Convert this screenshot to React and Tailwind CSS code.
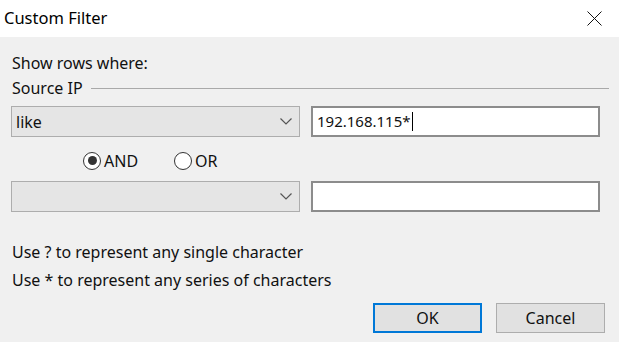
import { useState } from 'react'

const font = { fontFamily: '"Noto Sans", "Open Sans", sans-serif' }

function Chevron() {
  return (
    <svg width="12" height="7" viewBox="0 0 12 7" className="text-[#555]">
      <path d="M0.5 0.5 L6 6 L11.5 0.5" fill="none" stroke="currentColor" strokeWidth="1.2" />
    </svg>
  )
}

function Combo({ value }) {
  return (
    <div className="w-[289px] h-[31px] bg-[#e5e5e5] border border-[#adadad] flex items-center justify-between pl-[4px] pr-[7px]">
      <span className="text-[16px] text-[#111] leading-none">{value}</span>
      <Chevron />
    </div>
  )
}

function TextBox({ value, caret }) {
  return (
    <div className="w-[289px] h-[31px] bg-white border-2 border-[#8c8c8c] flex items-center pl-[4px]">
      <span className="text-[15px] text-[#111] leading-none">{value}</span>
      {caret && <span className="w-px h-[19px] bg-black ml-[1px]" />}
    </div>
  )
}

function Radio({ label, checked, onClick }) {
  return (
    <button onClick={onClick} className="flex items-center gap-[3px]">
      <span className="w-[18px] h-[18px] rounded-full border border-[#333] bg-white flex items-center justify-center">
        {checked && <span className="w-[9px] h-[9px] rounded-full bg-[#333]" />}
      </span>
      <span className="text-[16px] text-[#111] leading-none">{label}</span>
    </button>
  )
}

export default function App() {
  const [mode, setMode] = useState('and')

  return (
    <div className="w-[619px] h-[342px] flex flex-col bg-[#f0f0f0] overflow-hidden" style={font}>
      {/* title bar */}
      <div className="h-[37px] bg-white flex items-center justify-between pl-[4px] pr-[17px]">
        <span className="text-[16.5px] text-black leading-none">Custom Filter</span>
        <svg width="15" height="15" viewBox="0 0 15 15">
          <path d="M0.5 0.5 L14.5 14.5 M14.5 0.5 L0.5 14.5" stroke="#111" strokeWidth="1" />
        </svg>
      </div>

      <div className="flex-1 flex flex-col pl-[11px] pt-[16px] text-[16px] text-[#111]">
        <div className="h-[20px] flex items-center pl-[1px]">Show rows where:</div>
        <div className="h-[20px] mt-[5px] flex items-center gap-[8px] pl-[1px] pr-[10px]">
          <span>Source IP</span>
          <div className="flex-1 h-px bg-[#a9a9a9]" />
        </div>

        <div className="mt-[8px] flex gap-[11px]">
          <Combo value="like" />
          <TextBox value="192.168.115*" caret />
        </div>

        <div className="h-[44px] pt-[3px] flex items-center gap-[36px] pl-[72px]">
          <Radio label="AND" checked={mode === 'and'} onClick={() => setMode('and')} />
          <Radio label="OR" checked={mode === 'or'} onClick={() => setMode('or')} />
        </div>

        <div className="flex gap-[11px]">
          <Combo value="" />
          <TextBox value="" />
        </div>

        <div className="h-[20px] mt-[30px] flex items-center pl-[1px]">Use ? to represent any single character</div>
        <div className="h-[20px] mt-[8px] flex items-center pl-[1px]">Use * to represent any series of characters</div>

        <div className="mt-[13px] flex justify-end gap-[14px] pr-[14px]">
          <button className="w-[109px] h-[30px] bg-[#e1e1e1] border-2 border-[#0078d7] text-[16px] text-[#111]">OK</button>
          <button className="w-[109px] h-[30px] bg-[#e1e1e1] border border-[#adadad] text-[16px] text-[#111]">Cancel</button>
        </div>
      </div>
    </div>
  )
}
